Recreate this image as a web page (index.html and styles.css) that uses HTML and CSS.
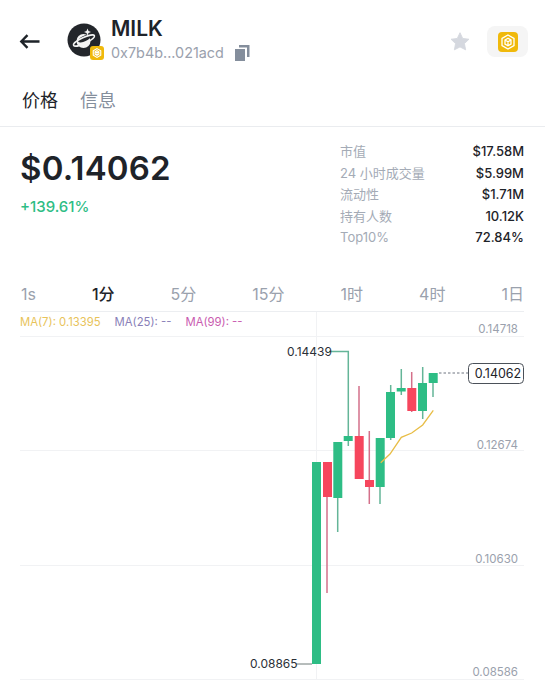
FILE: index.html
```html
<!DOCTYPE html>
<html lang="zh">
<head>
  <meta charset="UTF-8">
  <meta name="viewport" content="width=device-width, initial-scale=1.0">
  <title>MILK</title>
  <link rel="stylesheet" href="styles.css">
</head>
<body>
  <header class="top">
    <svg class="back" width="21" height="15" viewBox="0 0 21 15"><path d="M20.500 7.500H2.500M8.500 1.200L2.300 7.500l6.200 6.300" fill="none" stroke="#1e2329" stroke-width="2.400"/></svg>
    <div class="avatar">
      <svg width="34" height="34" viewBox="0 0 34 34">
        <circle cx="17" cy="17" r="16.500" fill="#23262b"/>
        <circle cx="16.500" cy="18" r="7" fill="#f4f4f4"/>
        <ellipse cx="17.500" cy="15.500" rx="7" ry="2.800" transform="rotate(-25 17.500 15.500)" fill="#23262b"/>
        <ellipse cx="17" cy="17.500" rx="11.500" ry="3" transform="rotate(-25 17 17.500)" fill="none" stroke="#f4f4f4" stroke-width="1.500"/>
        <path d="M20.500 5.500l1 2.500 2.500 1-2.500 1-1 2.500-1-2.500-2.500-1 2.500-1z" fill="#f4f4f4"/>
      </svg>
      <span class="badge">
        <svg width="10" height="10" viewBox="0 0 16 16" fill="none" stroke="#fff" stroke-width="1.800"><path d="M8 1l6 3.400v7.200L8 15l-6-3.400V4.400z"/><path d="M5 6l3-1.700L11 6v4l-3 1.700L5 10zM5 6l3 1.700L11 6M8 7.700v4"/></svg>
      </span>
    </div>
    <div class="token">
      <div class="token-name">MILK</div>
      <div class="token-addr">
        <span>0x7b4b...021acd</span>
        <svg width="15" height="16" viewBox="0 0 15 16"><path d="M0 4h10v12H0z" fill="#848e9c"/><path d="M4 0h10.500v12H12V2.500H4z" fill="#848e9c"/></svg>
      </div>
    </div>
    <svg class="star" width="20" height="19" viewBox="0 0 22 21"><path d="M11 .8l3 6.300 6.900.9-5 4.800 1.300 6.900L11 16.500l-6.200 3.200 1.300-6.900-5-4.800L8 7.100z" fill="#d5d8df" stroke="#d5d8df" stroke-linejoin="round"/></svg>
    <div class="chain">
      <span class="chain-icon">
        <svg width="16" height="16" viewBox="0 0 16 16" fill="none" stroke="#fff" stroke-width="1.300"><path d="M8 1l6 3.400v7.200L8 15l-6-3.400V4.400z"/><path d="M5 6l3-1.700L11 6v4l-3 1.700L5 10zM5 6l3 1.700L11 6M8 7.700v4"/></svg>
      </span>
    </div>
  </header>

  <nav class="tabs">
    <span class="tab tab-active">价格</span>
    <span class="tab">信息</span>
  </nav>

  <section class="summary">
    <div>
      <div class="price">$0.14062</div>
      <div class="change">+139.61%</div>
    </div>
    <dl class="stats">
      <div class="stat"><dt>市值</dt><dd>$17.58M</dd></div>
      <div class="stat"><dt>24 小时成交量</dt><dd>$5.99M</dd></div>
      <div class="stat"><dt>流动性</dt><dd>$1.71M</dd></div>
      <div class="stat"><dt>持有人数</dt><dd>10.12K</dd></div>
      <div class="stat"><dt>Top10%</dt><dd>72.84%</dd></div>
    </dl>
  </section>

  <div class="ranges">
    <span>1s</span>
    <span class="range-active">1分</span>
    <span>5分</span>
    <span>15分</span>
    <span>1时</span>
    <span>4时</span>
    <span>1日</span>
  </div>

  <section class="chart">
    <div class="legend">
      <span class="ma7">MA(7): 0.13395</span>
      <span class="ma25">MA(25): --</span>
      <span class="ma99">MA(99): --</span>
    </div>
    <svg class="plot" width="545" height="368" viewBox="0 312 545 368">
      <g stroke="#f1f2f4" stroke-width="1">
        <path d="M20 336.500H524M20 450.500H524M20 565.500H524M20 679.500H524M316.500 312V680"/>
      </g>
      <g class="axis">
        <text x="518" y="333">0.14718</text>
        <text x="518" y="449">0.12674</text>
        <text x="518" y="563">0.10630</text>
        <text x="518" y="676">0.08586</text>
      </g>

      <g stroke="#64b598" stroke-width="1.500" fill="none">
        <path d="M329 351.500H348.300V446"/>
        <path d="M337.700 497V532M390.700 385V440M401.300 369V395M422.700 367V419M433 382V397M380 487V504"/>
      </g>
      <g stroke="#d4708a" stroke-width="1.500" fill="none">
        <path d="M327 497V593M359 386V479M369.300 431V504M411.700 372V412"/>
      </g>
      <path d="M296 664H312" stroke="#6f7a78" stroke-width="1"/>

      <g fill="#2ebd85">
        <rect x="312" y="462" width="9" height="202"/>
        <rect x="333.300" y="442" width="9" height="56"/>
        <rect x="343.700" y="436" width="9" height="5"/>
        <rect x="375.700" y="438" width="9" height="49"/>
        <rect x="386" y="392" width="9" height="46"/>
        <rect x="396.700" y="388" width="9" height="3.500"/>
        <rect x="418" y="383" width="9" height="28"/>
        <rect x="428.700" y="373" width="9" height="10"/>
      </g>
      <g fill="#f6465d">
        <rect x="323" y="462" width="9" height="35"/>
        <rect x="354.700" y="436" width="9" height="43"/>
        <rect x="365" y="480" width="9" height="7"/>
        <rect x="407.300" y="388" width="9" height="23"/>
      </g>
      <path d="M380.700 462.700L390 454L401.300 437.300L411.700 433L422.700 425L433.300 410.300" fill="none" stroke="#e8bd45" stroke-width="1.300"/>

      <path d="M439 373H468" stroke="#6e7480" stroke-width="1" stroke-dasharray="2.500 2"/>
      <rect x="468.500" y="363.500" width="55" height="20" rx="4" fill="#fff" stroke="#4b5159"/>
      <text class="tag" x="498" y="378">0.14062</text>
      <text class="mark" x="287" y="356">0.14439</text>
      <text class="mark" x="250" y="668">0.08865</text>
    </svg>
  </section>
</body>
</html>
```

FILE: styles.css
```css
* {
  box-sizing: border-box;
}
html, body {
  margin: 0;
  padding: 0;
  height: 680px;
  overflow: hidden;
  background-color: #fff;
}
body {
  font-family: Inter, "Noto Sans CJK SC", sans-serif;
  color: #1e2329;
}
.top {
  display: flex;
  align-items: center;
  height: 72px;
  padding: 6px 17px 0 19px;
}
.back {
  margin-top: 5px;
  margin-right: 27px;
}
.avatar {
  position: relative;
  width: 34px;
  height: 34px;
  margin-top: 2px;
}
.avatar > svg {
  display: block;
}
.badge {
  position: absolute;
  right: -3px;
  bottom: -3px;
  display: flex;
  align-items: center;
  justify-content: center;
  width: 14px;
  height: 14px;
  border-radius: 3px;
  background-color: #f0b90b;
}
.token {
  margin-left: 10px;
}
.token-name {
  font-size: 21px;
  font-weight: 600;
  line-height: 24px;
}
.token-addr {
  display: flex;
  align-items: center;
  gap: 11px;
  margin-top: 3px;
  font-size: 14.400px;
  line-height: 18px;
  color: #9aa1ad;
}
.star {
  margin-left: auto;
  margin-top: 5px;
  margin-right: 17px;
}
.chain {
  display: flex;
  align-items: center;
  justify-content: center;
  width: 41px;
  height: 31px;
  margin-top: 5px;
  border-radius: 8px;
  background-color: #f5f5f5;
}
.chain-icon {
  display: flex;
  align-items: center;
  justify-content: center;
  width: 20px;
  height: 20px;
  border-radius: 4px;
  background-color: #f0b90b;
}
.tabs {
  display: flex;
  gap: 22px;
  height: 55px;
  padding: 16px 22px 0;
  border-bottom: 1px solid #eaecef;
  font-size: 18px;
  line-height: 26px;
  color: #848e9c;
}
.tab-active {
  color: #1e2329;
}
.summary {
  display: flex;
  justify-content: space-between;
  padding: 14px 21px 0 20px;
  height: 150px;
}
.price {
  margin-top: 7px;
  font-size: 33px;
  font-weight: 600;
  line-height: 40px;
  letter-spacing: 0.2px;
}
.change {
  margin-top: 10px;
  font-size: 15px;
  font-weight: 500;
  line-height: 18px;
  color: #2ebd85;
}
.stats {
  width: 184px;
  margin: 0;
}
.stat {
  display: flex;
  justify-content: space-between;
  height: 21.500px;
  font-size: 13px;
  line-height: 21.500px;
}
.stat dt {
  color: #a4abb6;
}
.stat dd {
  margin: 0;
  font-weight: 500;
}
.ranges {
  display: flex;
  justify-content: space-between;
  height: 35px;
  margin: 0 21px 0 21px;
  padding-top: 5px;
  border-bottom: 1px solid #eceef1;
  font-size: 16px;
  line-height: 24px;
  color: #9aa1ad;
}
.range-active {
  color: #1e2329;
  font-weight: 500;
}
.chart {
  position: relative;
  height: 368px;
}
.plot {
  display: block;
}
.legend {
  position: absolute;
  left: 20px;
  top: 2px;
  display: flex;
  gap: 14px;
  font-size: 11.300px;
  line-height: 16px;
}
.ma7 {
  color: #e8c35a;
}
.ma25 {
  color: #8a7fb8;
}
.ma99 {
  color: #c95bb0;
}
.axis text {
  font-family: Inter, sans-serif;
  font-size: 11.500px;
  fill: #9aa1ad;
  text-anchor: end;
}
.tag {
  font-family: Inter, sans-serif;
  font-size: 12.500px;
  fill: #1e2329;
  text-anchor: middle;
}
.mark {
  font-family: Inter, sans-serif;
  font-size: 12px;
  fill: #2b3037;
}
```
